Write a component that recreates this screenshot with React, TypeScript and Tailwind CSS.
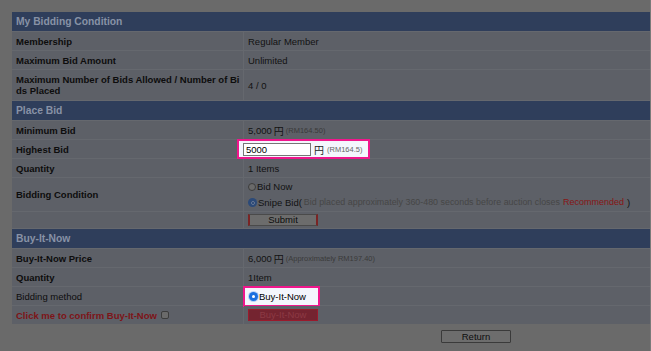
import React from "react";

const LBL = "bg-[#5d6067] pl-[4px] pr-0 flex items-center text-[9.5px] font-bold text-[#0d0d0d] leading-[11px]";
const VAL = "bg-[#5d6067] pl-[4px] flex items-center text-[9.5px] text-[#121212] leading-[11px]";
const HDR = "col-span-2 h-[19px] bg-[#2f3e5b] px-[4px] flex items-center text-[10.3px] font-bold text-[#8892a6]";

function Row({ label, children, h = "h-[18px]", bold = true, labelCls = "" }: { label: React.ReactNode; children?: React.ReactNode; h?: string; bold?: boolean; labelCls?: string }) {
  return (
    <>
      <div className={`${LBL} ${h} ${bold ? "" : "!font-normal"} ${labelCls}`}>{label}</div>
      <div className={`${VAL} ${h} relative`}>{children}</div>
    </>
  );
}

function Yen() {
  return <span className="font-['Noto_Sans_CJK_JP',sans-serif] text-[10px] leading-[11px] mx-[2px]">円</span>;
}

function RadioOff() {
  return <span className="inline-block w-[8px] h-[8px] rounded-full border border-[#3c3c3c] bg-[#6a6a6a] mr-[1px]" />;
}

function RadioOnDim() {
  return (
    <span className="inline-flex items-center justify-center w-[9px] h-[9px] rounded-full bg-[#2c4a78] mr-[1px]">
      <span className="w-[4px] h-[4px] rounded-full bg-[#1d3c6e] border border-[#6a7a96]" />
    </span>
  );
}

export default function App() {
  return (
    <div className="w-[651px] h-[351px] bg-[#6a6a6a] overflow-hidden font-['Liberation_Sans',Arial,sans-serif] border-r border-[#7a7a7a]">
      <div className="pt-[12px] pl-[12px]">
        <div className="w-[638px] grid grid-cols-[231px_406px] gap-px bg-[#65686e]">
          <div className={HDR}>My Bidding Condition</div>
          <Row label="Membership">Regular Member</Row>
          <Row label="Maximum Bid Amount">Unlimited</Row>
          <Row label={<span className="break-all">Maximum Number of Bids Allowed / Number of Bids Placed</span>} h="h-[30px]">4 / 0</Row>

          <div className={HDR}>Place Bid</div>
          <Row label="Minimum Bid">
            5,000<Yen /><span className="text-[7.5px] text-[#3a3a3a]">(RM164.50)</span>
          </Row>
          <Row label="Highest Bid">
            <div className="absolute left-[-7px] top-[-1px] w-[133px] h-[20px] border-2 border-[#f0168c] bg-[#f4f6fd] flex items-center pl-[4px]">
              <div className="w-[68px] h-[13px] border border-[#767676] bg-white text-[9.5px] text-black leading-[11px] pl-[2px] flex items-center">5000</div>
              <span className="font-['Noto_Sans_CJK_JP',sans-serif] text-[10px] leading-[11px] text-[#222] ml-[3px] mr-[3px]">円</span>
              <span className="text-[7.5px] text-[#666]">(RM164.5)</span>
            </div>
          </Row>
          <Row label="Quantity">1 Items</Row>
          <Row label="Bidding Condition" h="h-[33px]">
            <div className="flex flex-col gap-[5px]">
              <div className="flex items-center"><RadioOff />Bid Now</div>
              <div className="flex items-center">
                <RadioOnDim />Snipe Bid(
                <span className="text-[8.9px] text-[#464646] ml-[2px]">Bid placed approximately 360-480 seconds before auction closes</span>
                <span className="text-[9px] text-[#861515] ml-[3px]">Recommended</span>
                <span className="ml-[3px]">)</span>
              </div>
            </div>
          </Row>
          <Row label="" h="h-[16px]">
            <div className="w-[70px] h-[12px] bg-[#6c6c6c] border-x-2 border-x-[#7a2424] border-y border-y-[#4a4a4a] flex items-center justify-center text-[9.5px] text-[#0d0d0d] leading-[10px]">Submit</div>
          </Row>

          <div className={HDR}>Buy-It-Now</div>
          <Row label="Buy-It-Now Price">
            6,000<Yen /><span className="text-[7.5px] text-[#3a3a3a]">(Approximately RM197.40)</span>
          </Row>
          <Row label="Quantity">1Item</Row>
          <Row label="Bidding method" bold={false}>
            <div className="absolute left-[-1px] top-[-1px] w-[77px] h-[21px] border-2 border-[#f0168c] bg-[#f4f6fd] flex items-center pl-[3px]">
              <span className="inline-flex items-center justify-center w-[11px] h-[11px] rounded-full bg-[#bcd3f6]">
                <span className="inline-flex items-center justify-center w-[9px] h-[9px] rounded-full bg-[#1a6fe0]">
                  <span className="w-[3px] h-[3px] rounded-full bg-white" />
                </span>
              </span>
              <span className="text-[9.5px] text-black leading-[11px]">Buy-It-Now</span>
            </div>
          </Row>
          <Row label={<span className="flex items-center text-[#7d1418]">Click me to confirm Buy-It-Now<span className="ml-[4px] inline-block w-[8px] h-[8px] rounded-[2px] border border-[#3c3c3c] bg-[#6a6a6a]" /></span>}>
            <div className="w-[70px] h-[12px] bg-[#742430] border border-[#9a1a2c] flex items-center justify-center text-[9.5px] text-[#8c3a44] leading-[10px]">Buy-It-Now</div>
          </Row>
        </div>
        <div className="pl-[429px] pt-[6px]">
          <div className="w-[70px] h-[13px] bg-[#6d6d6d] border border-[#3a3a3a] rounded-[1px] flex items-center justify-center text-[9.5px] text-[#0d0d0d] leading-[10px]">Return</div>
        </div>
      </div>
    </div>
  );
}
